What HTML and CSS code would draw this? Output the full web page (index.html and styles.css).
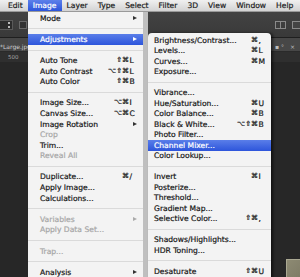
FILE: index.html
```html
<!DOCTYPE html>
<html>
<head>
<meta charset="utf-8">
<link rel="stylesheet" href="styles.css">
</head>
<body>
<div class="screen">
  <div class="menubar">
    <span class="mb-item">Edit</span>
    <span class="mb-item active">Image</span>
    <span class="mb-item">Layer</span>
    <span class="mb-item">Type</span>
    <span class="mb-item">Select</span>
    <span class="mb-item">Filter</span>
    <span class="mb-item">3D</span>
    <span class="mb-item">View</span>
    <span class="mb-item">Window</span>
    <span class="mb-item">Help</span>
  </div>
  <div class="toolbar">
    <div class="tb-group">
      <span class="dropdown"><span class="updown"></span></span>
      <span class="chk"></span>
    </div>
    <div class="tb-group">
      <span class="ico grid"></span>
      <span class="ico box"></span>
    </div>
  </div>
  <div class="tabs">
    <span class="tab">*Large.jpg</span>
    <span class="tab-right"><span class="deg">▪ °</span><span class="close">×</span></span>
  </div>
  <div class="ruler"><span class="ruler-num">500</span></div>
  <div class="canvas"><div class="photo"></div></div>

  <div class="menu main">
    <div class="item"><span class="label">Mode</span><span class="arrow"></span></div>
    <div class="sep"></div>
    <div class="item hl"><span class="label">Adjustments</span><span class="arrow"></span></div>
    <div class="sep"></div>
    <div class="item"><span class="label">Auto Tone</span><span class="sc"><span class="mods">⇧⌘</span><span class="key">L</span></span></div>
    <div class="item"><span class="label">Auto Contrast</span><span class="sc"><span class="mods">⌥⇧⌘</span><span class="key">L</span></span></div>
    <div class="item"><span class="label">Auto Color</span><span class="sc"><span class="mods">⇧⌘</span><span class="key">B</span></span></div>
    <div class="sep"></div>
    <div class="item"><span class="label">Image Size...</span><span class="sc"><span class="mods">⌥⌘</span><span class="key">I</span></span></div>
    <div class="item"><span class="label">Canvas Size...</span><span class="sc"><span class="mods">⌥⌘</span><span class="key">C</span></span></div>
    <div class="item"><span class="label">Image Rotation</span><span class="arrow"></span></div>
    <div class="item dis"><span class="label">Crop</span></div>
    <div class="item"><span class="label">Trim...</span></div>
    <div class="item dis"><span class="label">Reveal All</span></div>
    <div class="sep"></div>
    <div class="item"><span class="label">Duplicate...</span><span class="sc"><span class="mods">⌘</span><span class="key">/</span></span></div>
    <div class="item"><span class="label">Apply Image...</span></div>
    <div class="item"><span class="label">Calculations...</span></div>
    <div class="sep"></div>
    <div class="item dis"><span class="label">Variables</span><span class="arrow"></span></div>
    <div class="item dis"><span class="label">Apply Data Set...</span></div>
    <div class="sep"></div>
    <div class="item dis"><span class="label">Trap...</span></div>
    <div class="sep"></div>
    <div class="item"><span class="label">Analysis</span><span class="arrow"></span></div>
  </div>

  <div class="menu sub">
    <div class="item"><span class="label">Brightness/Contrast...</span><span class="sc"><span class="mods">⌘</span><span class="key">,</span></span></div>
    <div class="item"><span class="label">Levels...</span><span class="sc"><span class="mods">⌘</span><span class="key">L</span></span></div>
    <div class="item"><span class="label">Curves...</span><span class="sc"><span class="mods">⌘</span><span class="key">M</span></span></div>
    <div class="item"><span class="label">Exposure...</span></div>
    <div class="sep"></div>
    <div class="item"><span class="label">Vibrance...</span></div>
    <div class="item"><span class="label">Hue/Saturation...</span><span class="sc"><span class="mods">⌘</span><span class="key">U</span></span></div>
    <div class="item"><span class="label">Color Balance...</span><span class="sc"><span class="mods">⌘</span><span class="key">B</span></span></div>
    <div class="item"><span class="label">Black &amp; White...</span><span class="sc"><span class="mods">⌥⇧⌘</span><span class="key">B</span></span></div>
    <div class="item"><span class="label">Photo Filter...</span></div>
    <div class="item hl"><span class="label">Channel Mixer...</span></div>
    <div class="item"><span class="label">Color Lookup...</span></div>
    <div class="sep"></div>
    <div class="item"><span class="label">Invert</span><span class="sc"><span class="mods">⌘</span><span class="key">I</span></span></div>
    <div class="item"><span class="label">Posterize...</span></div>
    <div class="item"><span class="label">Threshold...</span></div>
    <div class="item"><span class="label">Gradient Map...</span></div>
    <div class="item"><span class="label">Selective Color...</span><span class="sc"><span class="mods">⇧⌘</span><span class="key">,</span></span></div>
    <div class="sep"></div>
    <div class="item"><span class="label">Shadows/Highlights...</span></div>
    <div class="item"><span class="label">HDR Toning...</span></div>
    <div class="sep"></div>
    <div class="item"><span class="label">Desaturate</span><span class="sc"><span class="mods">⇧⌘</span><span class="key">U</span></span></div>
  </div>
</div>
</body>
</html>
```

FILE: styles.css
```css
* { box-sizing: border-box; }
html, body { margin: 0; padding: 0; }
body {
  width: 300px;
  height: 277px;
  overflow: hidden;
  background: #272727;
  font-family: "DejaVu Sans", sans-serif;
}
.screen {
  position: relative;
  width: 300px;
  height: 277px;
  display: flex;
  flex-direction: column;
  overflow: hidden;
}

/* menu bar */
.menubar {
  height: 12px;
  flex: none;
  display: flex;
  padding-left: 3px;
  background: linear-gradient(#f0f0f0, #d3d3d3);
  border-bottom: 1px solid #9a9a9a;
  font-size: 7.6px;
  color: #1c1c1c;
  -webkit-text-stroke: 0.2px currentColor;
}
.mb-item {
  padding: 0 5px;
  line-height: 11px;
  white-space: nowrap;
}
.mb-item.active {
  background: linear-gradient(#5d80ea, #2c55db);
  color: #fff;
}

/* workspace behind menus */
.toolbar {
  height: 26px;
  flex: none;
  display: flex;
  justify-content: space-between;
  align-items: center;
  background: linear-gradient(#434343, #393939);
  border-bottom: 1px solid #1f1f1f;
}
.tb-group {
  display: flex;
  align-items: center;
  gap: 6px;
}
.dropdown {
  width: 13px;
  height: 10px;
  background: #2c2c2c;
  border: 1px solid #5a5a5a;
  border-left: none;
  display: flex;
  justify-content: flex-end;
  align-items: center;
  padding-right: 2px;
}
.updown {
  width: 2px;
  height: 6px;
  background: linear-gradient(#bbb 0 2px, transparent 2px 4px, #bbb 4px 6px);
}
.chk {
  width: 8px;
  height: 8px;
  border: 1px solid #6a6a6a;
  background: #333;
}
.ico {
  height: 8px;
  border: 1px solid #8a8a8a;
}
.grid {
  width: 11px;
  background: linear-gradient(90deg, transparent 4px, #8a8a8a 4px 5px, transparent 5px);
}
.box {
  width: 10px;
  margin-right: -2px;
  background: #444;
}
.tabs {
  height: 14px;
  flex: none;
  display: flex;
  justify-content: space-between;
  align-items: center;
  background: #474747;
  border-bottom: 1px solid #2a2a2a;
  font-size: 6px;
  color: #cfcfcf;
}
.tab { padding-top: 3px; padding-left: 0; }
.tab-right {
  display: flex;
  gap: 6px;
  padding-top: 3px;
  padding-right: 5px;
  color: #bdbdbd;
}
.ruler {
  height: 10px;
  flex: none;
  background: #2f2f2f;
  font-size: 5.5px;
  color: #a8a8a8;
  padding-left: 8px;
  line-height: 10px;
}
.canvas {
  flex: 1;
  display: flex;
  justify-content: flex-end;
  align-items: flex-end;
  background: #272727;
}
.photo {
  width: 14px;
  height: 18px;
  background: linear-gradient(135deg, #8d8a73, #7f7c66);
  border-top: 1px solid #aaa892;
  border-left: 1px solid #aaa892;
}

/* menus */
.menu {
  position: absolute;
  font-size: 7.6px;
  color: #161616;
  background: #f3f3f3;
  -webkit-text-stroke: 0.2px currentColor;
}
.main {
  left: 28px;
  top: 12px;
  width: 120px;
  bottom: -12px;
  padding-top: 1px;
  border-right: 5px solid #bfbfbf;
}
.sub {
  left: 148px;
  top: 33px;
  width: 123px;
  bottom: -12px;
  padding-top: 2px;
  border-radius: 4px 4px 0 0;
  box-shadow: 2px 0 3px rgba(0, 0, 0, 0.55);
}
.item {
  height: 10.58px;
  display: flex;
  align-items: center;
  padding: 0 6.5px 0 12px;
  white-space: nowrap;
}
.sub .item {
  height: 10.5px;
  padding: 0 5.5px 0 6px;
}
.sep {
  height: 10.58px;
  display: flex;
  align-items: center;
}
.sub .sep { height: 10.5px; }
.sep::before {
  content: "";
  flex: 1;
  height: 1px;
  background: #dadada;
}
.sc {
  margin-left: auto;
  display: flex;
  font-size: 7px;
}
.mods { text-align: right; }
.key {
  width: 7.5px;
  padding-left: 0.5px;
  text-align: left;
  font-size: 7.6px;
}
.arrow {
  margin-left: auto;
  width: 0;
  height: 0;
  border-left: 4px solid #333;
  border-top: 2.5px solid transparent;
  border-bottom: 2.5px solid transparent;
}
.hl {
  background: linear-gradient(#5a7ee9, #2d55db);
  color: #fff;
}
.hl .arrow { border-left-color: #fff; }
.dis { color: #a6a6a6; }
.dis .arrow { border-left-color: #aaa; }
```
